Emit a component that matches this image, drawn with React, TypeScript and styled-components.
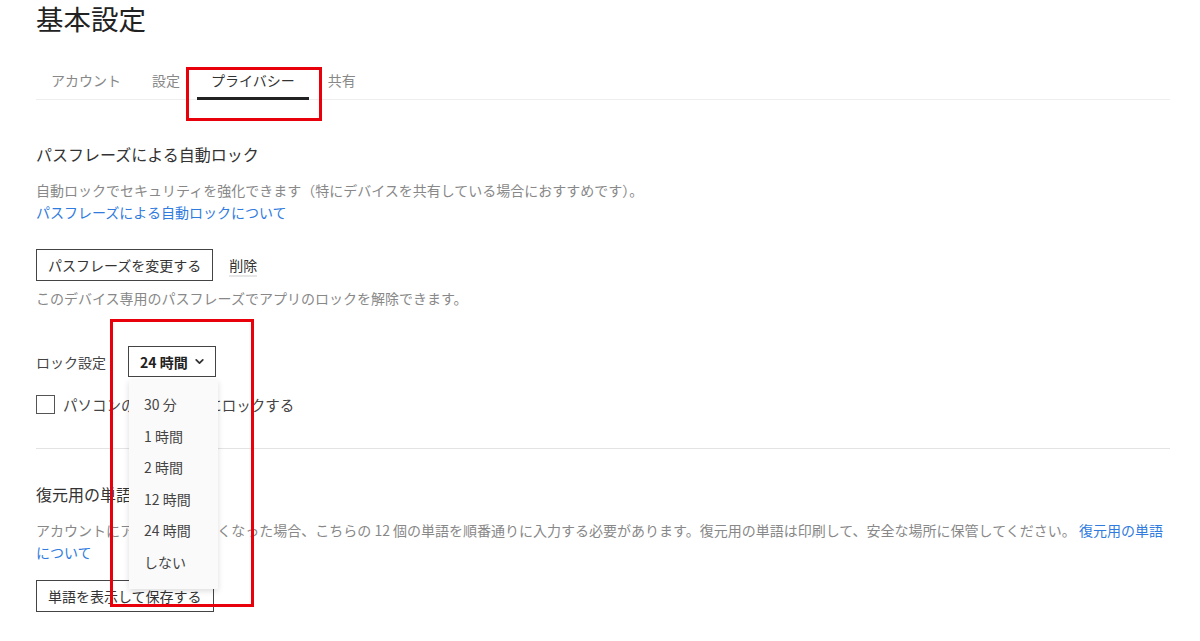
import styled, { createGlobalStyle } from 'styled-components';

const GlobalStyle = createGlobalStyle`
  body {
    margin: 0;
    background: #fff;
    font-family: "Noto Sans CJK JP", "Noto Sans", sans-serif;
    color: #333;
  }
`;

const Page = styled.div`
  padding: 0 30px 0 36px;
  width: 1134px;
`;

const Title = styled.h1`
  margin: 0;
  font-size: 27.5px;
  line-height: 36px;
  font-weight: 400;
  color: #222;
`;

const Tabs = styled.div`
  display: flex;
  gap: 3px;
  margin-top: 26px;
  border-bottom: 1px solid #eee;
`;

const Tab = styled.div<{ $active?: boolean }>`
  position: relative;
  padding: 8px 14px 7px;
  font-size: 14px;
  line-height: 20px;
  color: ${(p) => (p.$active ? '#333' : '#888')};
  border-bottom: 3px solid ${(p) => (p.$active ? '#222' : 'transparent')};
  margin-bottom: -1px;
  &:first-child {
    padding-left: 15px;
  }
  &:last-child {
    padding-left: 16px;
  }
`;

const RedBox = styled.div<{ $l: number; $t: number; $w: number; $h: number }>`
  position: absolute;
  left: ${(p) => p.$l}px;
  top: ${(p) => p.$t}px;
  width: ${(p) => p.$w}px;
  height: ${(p) => p.$h}px;
  border: 3px solid #e8000b;
  box-sizing: border-box;
  pointer-events: none;
  z-index: 5;
`;

const SectionTitle = styled.h2<{ $top: number }>`
  margin: ${(p) => p.$top}px 0 0;
  font-size: 16px;
  line-height: 24px;
  font-weight: 400;
  color: #333;
`;

const Desc = styled.p`
  margin: 13px 0 0;
  font-size: 14px;
  line-height: 22px;
  color: #888;
`;

const Link = styled.a<{ $block?: boolean }>`
  display: ${(p) => (p.$block ? 'block' : 'inline')};
  color: #2f7bde;
  text-decoration: none;
`;

const NoWrap = styled.span`
  white-space: nowrap;
`;

const ButtonRow = styled.div`
  display: flex;
  align-items: center;
  gap: 16px;
  margin-top: 26px;
`;

const OutlineButton = styled.button<{ $top?: number }>`
  margin-top: ${(p) => p.$top ?? 0}px;
  height: 32px;
  padding: 0 11px;
  border: 1px solid #444;
  background: #fff;
  font-family: inherit;
  font-size: 14px;
  color: #333;
`;

const TextAction = styled.span`
  font-size: 14px;
  line-height: 20px;
  color: #333;
  border-bottom: 2px solid #e6e6e6;
  margin-top: 2px;
`;

const Help = styled.p`
  margin: 6px 0 0;
  font-size: 14px;
  line-height: 22px;
  color: #888;
`;

const LockRow = styled.div`
  display: flex;
  align-items: center;
  gap: 22px;
  margin-top: 37px;
`;

const Label = styled.span`
  font-size: 14px;
  color: #444;
`;

const SelectWrap = styled.div`
  position: relative;
`;

const SelectBox = styled.div`
  display: flex;
  align-items: center;
  gap: 6px;
  height: 31px;
  padding: 0 10px 0 11px;
  border: 1px solid #444;
  box-sizing: border-box;
  font-size: 14px;
  font-weight: 700;
  color: #222;
`;

const Menu = styled.ul`
  position: absolute;
  left: 1px;
  top: calc(100% + 3px);
  width: 89px;
  margin: 0;
  padding: 9px 0 10px;
  list-style: none;
  background: #fafafa;
  box-shadow: 0 2px 6px rgba(0, 0, 0, 0.14);
  z-index: 3;
`;

const MenuItem = styled.li`
  height: 31.6px;
  line-height: 31.6px;
  padding-left: 15px;
  font-size: 14px;
  color: #444;
`;

const CheckRow = styled.label`
  display: flex;
  align-items: center;
  gap: 8px;
  margin-top: 17px;
  font-size: 14.5px;
  color: #444;
`;

const CheckBox = styled.span`
  width: 19px;
  height: 19px;
  border: 1px solid #555;
  box-sizing: border-box;
`;

const Divider = styled.hr`
  margin: 33px 0 0;
  border: none;
  border-top: 1px solid #e3e3e3;
`;

const Chevron = () => (
  <svg width="11" height="11" viewBox="0 0 10 10" fill="none">
    <path d="M2 3.5 L5 6.5 L8 3.5" stroke="#333" strokeWidth="1.6" strokeLinecap="round" strokeLinejoin="round" />
  </svg>
);

const options = ['30 分', '1 時間', '2 時間', '12 時間', '24 時間', 'しない'];

const App = () => {
  return (
    <>
      <GlobalStyle />
      <Page>
        <Title>基本設定</Title>
        <Tabs>
          <Tab>アカウント</Tab>
          <Tab>設定</Tab>
          <Tab $active>
            プライバシー
            <RedBox $l={-11} $t={5} $w={136} $h={54} />
          </Tab>
          <Tab>共有</Tab>
        </Tabs>

        <SectionTitle $top={42}>パスフレーズによる自動ロック</SectionTitle>
        <Desc>
          自動ロックでセキュリティを強化できます（特にデバイスを共有している場合におすすめです）。
          <Link $block href="#">パスフレーズによる自動ロックについて</Link>
        </Desc>
        <ButtonRow>
          <OutlineButton>パスフレーズを変更する</OutlineButton>
          <TextAction>削除</TextAction>
        </ButtonRow>
        <Help>このデバイス専用のパスフレーズでアプリのロックを解除できます。</Help>

        <LockRow>
          <Label>ロック設定</Label>
          <SelectWrap>
            <SelectBox>
              24 時間 <Chevron />
            </SelectBox>
            <Menu>
              {options.map((o) => (
                <MenuItem key={o}>{o}</MenuItem>
              ))}
            </Menu>
            <RedBox $l={-18} $t={-27} $w={144} $h={288} />
          </SelectWrap>
        </LockRow>
        <CheckRow>
          <CheckBox />
          パソコンのスリープ時にロックする
        </CheckRow>

        <Divider />

        <SectionTitle $top={33}>復元用の単語</SectionTitle>
        <Desc>
          アカウントにアクセスできなくなった場合、こちらの 12 個の単語を順番通りに入力する必要があります。復元用の単語は印刷して、安全な場所に保管してください。{' '}
          <Link href="#">
            復元用の単語<NoWrap>について</NoWrap>
          </Link>
        </Desc>
        <OutlineButton $top={17}>単語を表示して保存する</OutlineButton>
      </Page>
    </>
  );
};

export default App;
